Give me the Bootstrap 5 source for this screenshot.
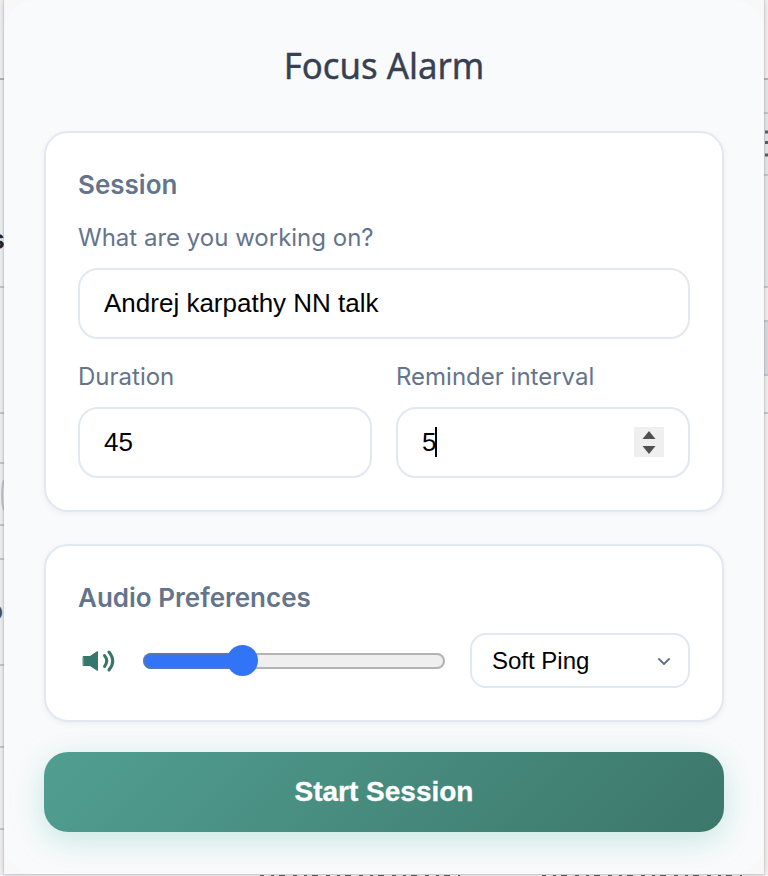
<!DOCTYPE html>
<html lang="en">
<head>
<meta charset="utf-8">
<meta name="viewport" content="width=device-width, initial-scale=1">
<title>Focus Alarm</title>
<link href="https://cdn.jsdelivr.net/npm/bootstrap@5.3.0/dist/css/bootstrap.min.css" rel="stylesheet">
<style>
body{height:876px;background:#f1f1f2;font-family:Inter,sans-serif;color:#64748b}
/* page visible around the popup */
.backdrop{position:absolute;inset:0;overflow:hidden}
.backdrop svg{display:block}
.popup{position:relative;width:760px;height:874px;margin:0 4px;padding:39px 40px 0;background:#f8f8f8;
  box-shadow:0 0 1px 1px rgba(120,100,120,.16),0 0 8px rgba(0,0,0,.14)}
.popup::before{content:"";position:absolute;inset:0;border-radius:32px;background:#f9fafc}
.popup>*{position:relative}
.popup-title{font-family:"Noto Sans",sans-serif;font-size:37px;font-weight:400;-webkit-text-stroke:.4px #374151;line-height:52px;height:52px;margin-bottom:40px;color:#374151;transform:scaleX(.94)}
.panel{border:2px solid #e2e8f0;border-radius:24px;padding:0 32px;background:#fff;box-shadow:0 2px 6px rgba(15,23,42,.05)}
.panel-session{height:381px;margin-bottom:32px;padding-top:35px}
.panel-audio{height:178px;margin-bottom:30px;padding-top:35px}
.panel-title{font-size:26px;font-weight:600;line-height:34px;margin:0;color:#64748b}
.field-label{display:block;font-size:24px;line-height:30px;margin:0 0 15px}
.task-label{margin-top:21px}
.pair-label{margin-top:23px}
.field{display:block;width:100%;height:71px;border:2px solid #e2e8f0;border-radius:20px;padding:0 24px;background:#fff;font:26px "Liberation Sans",sans-serif;color:#000;outline:0;appearance:textfield}
.field::-webkit-inner-spin-button{appearance:none}
.caret{position:absolute;left:39px;top:20px;width:2px;height:30px;background:#000}
.spin{position:absolute;right:26px;top:20px}
.volume{appearance:none;width:302px;height:16px;margin:0;border-radius:8px;box-shadow:inset 0 0 0 2px rgba(120,120,120,.5);
  background:linear-gradient(90deg,#3274f7 0 99px,#efefef 99px)}
.volume::-webkit-slider-thumb{appearance:none;width:31px;height:31px;border-radius:50%;background:#3274f7}
.tone{appearance:none;width:220px;height:55px;border:2px solid #e2e8f0;border-radius:16px;padding:0 20px;font:24px "Liberation Sans",sans-serif;color:#000;background:#fff}
.tone-arrow{position:absolute;right:18px;top:20px;pointer-events:none}
.audio-row{margin-top:18px;height:55px}
.start{height:80px;border:0;border-radius:24px;background:linear-gradient(135deg,#519f92,#3c776a);color:#fff;font:bold 28px "Liberation Sans",sans-serif;-webkit-text-stroke:.3px #fff;box-shadow:0 8px 32px rgba(79,190,160,.3)}
</style>
<script src="https://cdn.jsdelivr.net/npm/bootstrap@5.3.0/dist/js/bootstrap.bundle.min.js"></script>
</head>
<body class="position-relative overflow-hidden m-0">
<div class="backdrop" aria-hidden="true">
  <svg width="768" height="876" font-family="Inter, sans-serif">
    <path fill="#f5f2f2" d="M764 0h4v876h-4z"/>
    <path fill="#e9e9ed" d="M764 79h4v208h-4z"/><path fill="#dedce3" d="M764 321h4v54h-4z"/>
    <path stroke="#b4b4b6" stroke-width="2" d="M0 79h4M764 79h4"/>
    <path stroke="#c2cad2" stroke-width="2" d="M0 287h4M0 413h4M0 463h4M0 525h4M0 559h4M0 665h4M0 747h4M0 829h4M764 113h4M764 175h4M764 287h4M764 321h4M764 375h4M764 413h4"/>
    <path stroke="#c2cad2" stroke-width="2" fill="none" d="M4 480q-2 4-2 15t2 15"/>
    <text x="-10" y="249" font-size="27" font-weight="600" fill="#20242c">s</text>
    <text x="-13" y="620" font-size="27" font-weight="500" fill="#4b5563">o</text>
    <path stroke="#59606b" stroke-width="3" d="M765 132h3M765 142.500h3M765 155h3"/>
  </svg>
</div>
<main class="popup">
  <h1 class="popup-title text-center">Focus Alarm</h1>
  <section class="panel panel-session">
    <h2 class="panel-title">Session</h2>
    <label class="field-label task-label" for="task">What are you working on?</label>
    <input class="field" id="task" type="text" value="Andrej karpathy NN talk">
    <div class="d-flex gap-4">
      <div class="flex-fill w-50">
        <label class="field-label pair-label" for="duration">Duration</label>
        <input class="field" id="duration" type="number" value="45">
      </div>
      <div class="flex-fill w-50">
        <label class="field-label pair-label" for="interval">Reminder interval</label>
        <div class="position-relative">
          <input class="field" id="interval" type="number" value="5">
          <span class="caret"></span>
          <svg class="spin" width="30" height="30"><path fill="#efefef" d="M0 0h30v30H0z"/><path fill="#505050" d="M15 4l6.500 8h-13zM15 27l-6.500-8h13z"/></svg>
        </div>
      </div>
    </div>
  </section>
  <section class="panel panel-audio">
    <h2 class="panel-title">Audio Preferences</h2>
    <div class="audio-row d-flex align-items-center justify-content-between">
      <svg width="40" height="40" viewBox="0 0 40 40" fill="none" stroke="#35776c" stroke-width="3" stroke-linecap="round"><path fill="#35776c" stroke-width="1" stroke-linejoin="round" d="M5.500 15.500h6.500l7.500-5v19l-7.500-5H5.500z"/><path d="M26.500 14.500q4.500 5.500 0 11"/><path d="M31 11q7.500 9 0 18"/></svg>
      <input class="volume" type="range" min="0" max="100" step="0.1" value="31" aria-label="Volume">
      <div class="position-relative">
        <select class="tone d-block" aria-label="Sound"><option>Soft Ping</option></select>
        <svg class="tone-arrow" width="16" height="16" fill="none" stroke="#64748b" stroke-width="2" stroke-linecap="round" stroke-linejoin="round"><path d="M3 6l5 5 5-5"/></svg>
      </div>
    </div>
  </section>
  <button class="start btn w-100 d-block" type="button">Start Session</button>
</main>
<!-- tops of the page's text line showing below the popup -->
<svg class="position-absolute bottom-0 start-0" width="768" height="1" aria-hidden="true"><path stroke="#55555c" stroke-width="2" stroke-dasharray="4 7 3 5 6 8" d="M260 .5h200M542 .5h200"/></svg>
</body>
</html>
